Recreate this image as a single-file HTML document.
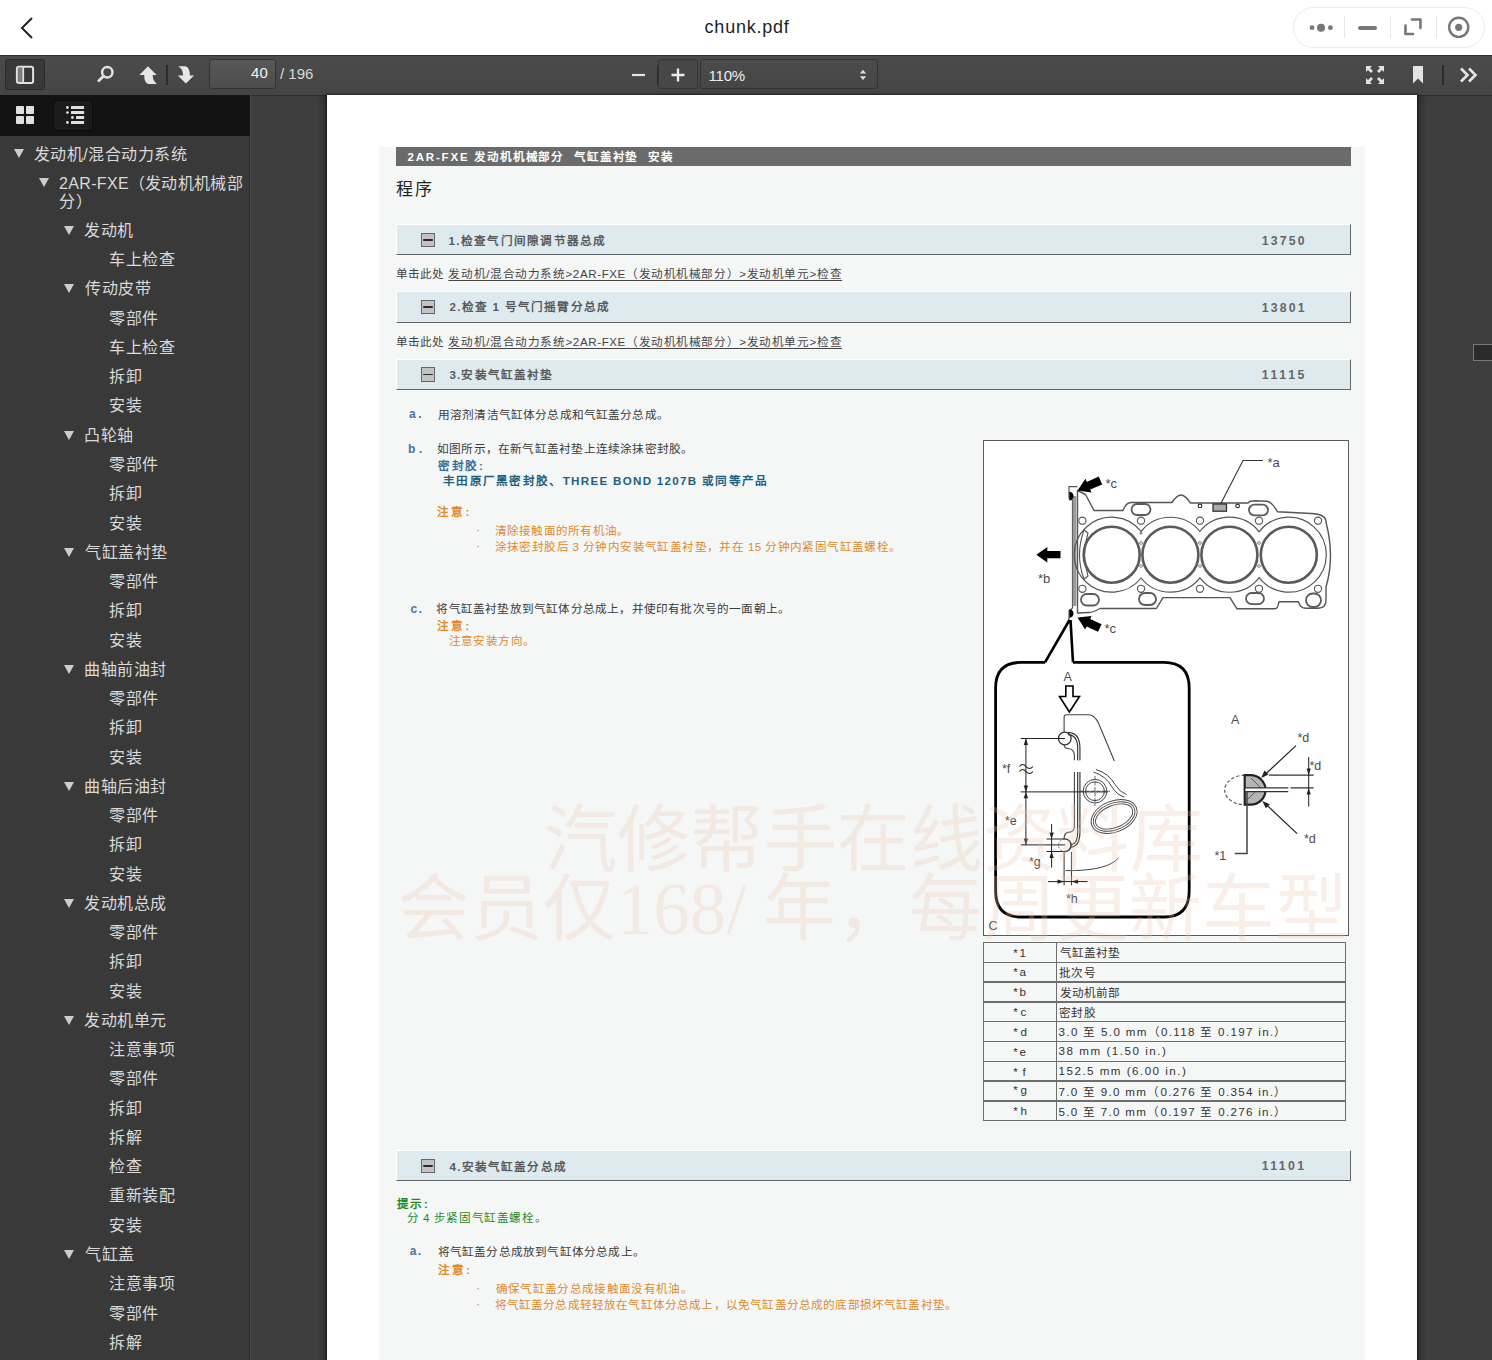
<!DOCTYPE html><html lang="zh-CN"><head><meta charset="utf-8"><title>chunk.pdf</title><style>
*{box-sizing:border-box;margin:0;padding:0}
html,body{width:1492px;height:1360px;overflow:hidden;background:#3e3e3e;font-family:"Liberation Sans",sans-serif}
.t{position:absolute;white-space:nowrap}
</style></head><body><div class="t" style="left:0;top:0;width:1492px;height:55px;background:#fff"></div><div class="t" style="left:704.60px;top:12.50px;font-family:'Liberation Sans',sans-serif;font-size:18px;line-height:29px;color:#1e1e1e;font-weight:normal;letter-spacing:0.763px;">chunk.pdf</div><svg class="t" style="left:18px;top:15px" width="18" height="26" viewBox="0 0 18 26"><path d="M14 3 L4 13 L14 23" fill="none" stroke="#222" stroke-width="2"/></svg><div class="t" style="left:1293px;top:7px;width:192px;height:41px;border:1px solid #ececec;border-radius:21px;background:#fff"></div><div class="t" style="left:1344px;top:16px;width:1px;height:22px;background:#e6e6e6"></div><div class="t" style="left:1390px;top:16px;width:1px;height:22px;background:#e6e6e6"></div><div class="t" style="left:1436px;top:16px;width:1px;height:22px;background:#e6e6e6"></div><svg class="t" style="left:1300px;top:10px" width="180" height="36" viewBox="1300 10 180 36"><circle cx="1312" cy="27.7" r="2.4" fill="#777"/><circle cx="1321" cy="27.7" r="4" fill="#777"/><circle cx="1330.4" cy="27.7" r="2.4" fill="#777"/><line x1="1360" y1="28" x2="1375" y2="28" stroke="#777" stroke-width="4" stroke-linecap="round"/><path d="M1405.5 25.5 V34 H1413 M1412 19.5 H1420.5 V28" fill="none" stroke="#777" stroke-width="2.6" stroke-linecap="round" stroke-linejoin="round"/><circle cx="1458.7" cy="27.3" r="9.6" fill="none" stroke="#777" stroke-width="2.4"/><circle cx="1458.7" cy="27.3" r="3.6" fill="#777"/></svg><div class="t" style="left:0;top:55px;width:1492px;height:40px;background:linear-gradient(#4b4b4b,#484848 50%,#444);border-top:1px solid #2e2e2e;box-shadow:0 1px 1px rgba(0,0,0,.25)"></div><div class="t" style="left:5px;top:59px;width:40px;height:31px;border-radius:3px;background:#393939;border:1px solid #2a2a2a"></div><svg class="t" style="left:14px;top:64px" width="22" height="22" viewBox="0 0 22 22"><rect x="2.9" y="2.8" width="16.2" height="16.2" rx="2" fill="none" stroke="#e2e2e2" stroke-width="2"/><rect x="3.9" y="3.8" width="4.6" height="14.2" fill="#7d7d7d"/><rect x="8.3" y="3.2" width="1.8" height="15.4" fill="#e2e2e2"/></svg><svg class="t" style="left:95px;top:64px" width="22" height="22" viewBox="0 0 22 22"><circle cx="12.3" cy="8.2" r="5.2" fill="none" stroke="#e2e2e2" stroke-width="2.5"/><line x1="8.6" y1="12" x2="3.8" y2="16.8" stroke="#e2e2e2" stroke-width="2.8" stroke-linecap="round"/></svg><svg class="t" style="left:137px;top:64px" width="22" height="22" viewBox="0 0 22 22"><path d="M10.9 2.3 L19.7 11.1 H15.7 Q15.7 17 19.9 19.9 L11.3 19.9 Q7.2 19 7.2 11.1 H2.4 Z" fill="#e6e6e6"/></svg><div class="t" style="left:166px;top:65px;width:2px;height:20px;background:#2a2a2a"></div><svg class="t" style="left:175px;top:64px" width="22" height="22" viewBox="0 0 22 22"><path d="M3.1 2.3 L10.5 2.3 Q14.9 3.5 14.9 11.5 H19 L10.9 19.6 L2.8 11.5 H8.1 Q8.1 5 3.1 2.3 Z" fill="#e6e6e6"/></svg><div class="t" style="left:209px;top:59px;width:67px;height:30px;border-radius:3px;background:linear-gradient(#585858,#4d4d4d);border:1px solid #333"></div><div class="t" style="left:250.90px;top:61.40px;font-family:'Liberation Sans',sans-serif;font-size:15px;line-height:24px;color:#f2f2f2;font-weight:normal;letter-spacing:0.200px;">40</div><div class="t" style="left:279.90px;top:61.90px;font-family:'Liberation Sans',sans-serif;font-size:15px;line-height:24px;color:#d8d8d8;font-weight:normal;letter-spacing:0.025px;">/ 196</div><svg class="t" style="left:628px;top:66px" width="20" height="18"><line x1="4" y1="9" x2="17" y2="9" stroke="#e6e6e6" stroke-width="2.2"/></svg><div class="t" style="left:657px;top:65px;width:1px;height:20px;background:#2a2a2a"></div><div class="t" style="left:658px;top:59px;width:40px;height:30px;border-radius:3px;background:#474747;border:1px solid #353535"></div><svg class="t" style="left:668px;top:65px" width="20" height="20"><path d="M3.5 10 H16.5 M10 3.5 V16.5" stroke="#ececec" stroke-width="2.4"/></svg><div class="t" style="left:700px;top:59px;width:178px;height:30px;border-radius:3px;background:linear-gradient(#4b4b4b,#464646);border:1px solid #333"></div><div class="t" style="left:708.60px;top:63.50px;font-family:'Liberation Sans',sans-serif;font-size:15px;line-height:24px;color:#eeeeee;font-weight:normal;letter-spacing:-0.233px;">110%</div><svg class="t" style="left:856px;top:66px" width="14" height="18"><path d="M3.8 7.6 L7 3.8 L10.2 7.6 Z M3.8 10.2 L7 14 L10.2 10.2 Z" fill="#ddd"/></svg><svg class="t" style="left:1364px;top:64px" width="22" height="22" viewBox="0 0 22 22" fill="#e2e2e2"><path d="M2 2 H8 L6 4 L9 7 L7 9 L4 6 L2 8 Z"/><path d="M20 2 V8 L18 6 L15 9 L13 7 L16 4 L14 2 Z"/><path d="M2 20 V14 L4 16 L7 13 L9 15 L6 18 L8 20 Z"/><path d="M20 20 H14 L16 18 L13 15 L15 13 L18 16 L20 14 Z"/></svg><svg class="t" style="left:1412px;top:65px" width="12" height="20"><path d="M1 1 H11 V18.5 L6 13.5 L1 18.5 Z" fill="#e4e4e4"/></svg><div class="t" style="left:1442px;top:65px;width:2px;height:20px;background:#2a2a2a"></div><svg class="t" style="left:1458px;top:66px" width="22" height="18" viewBox="0 0 22 18"><path d="M3 2.5 L9.5 9 L3 15.5 M11 2.5 L17.5 9 L11 15.5" fill="none" stroke="#e6e6e6" stroke-width="2.6"/></svg><div class="t" style="left:0;top:95px;width:250px;height:1265px;background:#393939"></div><div class="t" style="left:0;top:95px;width:250px;height:41px;background:#131313"></div><div class="t" style="left:249px;top:136px;width:1px;height:1224px;background:#2b2b2b"></div><div class="t" style="left:250px;top:95px;width:1px;height:1265px;background:#484848"></div><svg class="t" style="left:15px;top:105px" width="20" height="20" viewBox="0 0 20 20" fill="#e0e0e0"><rect x="1" y="1" width="8" height="8" rx="1"/><rect x="11" y="1" width="8" height="8" rx="1"/><rect x="1" y="11" width="8" height="8" rx="1"/><rect x="11" y="11" width="8" height="8" rx="1"/></svg><div class="t" style="left:53px;top:100px;width:40px;height:31px;border-radius:3px;background:#1b1b1b;border:1px solid #0b0b0b"></div><svg class="t" style="left:64px;top:104px" width="22" height="22" viewBox="0 0 22 22" fill="#e0e0e0"><rect x="7" y="2" width="13.1" height="3" rx=".5"/><rect x="7" y="7.1" width="13.1" height="3" rx=".5"/><rect x="12" y="12" width="8.1" height="3" rx=".5"/><rect x="7" y="17" width="13.1" height="3" rx=".5"/><circle cx="3.4" cy="3.5" r="1.4"/><circle cx="3.4" cy="8.6" r="1.4"/><circle cx="8.4" cy="13.5" r="1.4"/><circle cx="3.4" cy="18.5" r="1.4"/></svg><div class="t" style="left:33.80px;top:141.50px;font-family:'Liberation Sans',sans-serif;font-size:16px;line-height:26px;color:#d9d9d9;font-weight:normal;letter-spacing:0.522px;">发动机/混合动力系统</div><div class="t" style="left:14px;top:148.90px;width:0;height:0;border-left:5.7px solid transparent;border-right:5.7px solid transparent;border-top:9px solid #cdcdcd"></div><div class="t" style="left:59.10px;top:171.00px;font-family:'Liberation Sans',sans-serif;font-size:16px;line-height:26px;color:#d9d9d9;font-weight:normal;letter-spacing:0.315px;">2AR-FXE（发动机机械部</div><div class="t" style="left:39px;top:178.40px;width:0;height:0;border-left:5.7px solid transparent;border-right:5.7px solid transparent;border-top:9px solid #cdcdcd"></div><div class="t" style="left:59.10px;top:189.10px;font-family:'Liberation Sans',sans-serif;font-size:16px;line-height:26px;color:#d9d9d9;font-weight:normal;letter-spacing:0.600px;">分）</div><div class="t" style="left:84.00px;top:217.90px;font-family:'Liberation Sans',sans-serif;font-size:16px;line-height:26px;color:#d9d9d9;font-weight:normal;letter-spacing:0.600px;">发动机</div><div class="t" style="left:64px;top:225.80px;width:0;height:0;border-left:5.7px solid transparent;border-right:5.7px solid transparent;border-top:9px solid #cdcdcd"></div><div class="t" style="left:109.00px;top:247.16px;font-family:'Liberation Sans',sans-serif;font-size:16px;line-height:26px;color:#d9d9d9;font-weight:normal;letter-spacing:0.600px;">车上检查</div><div class="t" style="left:85.00px;top:276.42px;font-family:'Liberation Sans',sans-serif;font-size:16px;line-height:26px;color:#d9d9d9;font-weight:normal;letter-spacing:0.600px;">传动皮带</div><div class="t" style="left:64px;top:284.32px;width:0;height:0;border-left:5.7px solid transparent;border-right:5.7px solid transparent;border-top:9px solid #cdcdcd"></div><div class="t" style="left:109.00px;top:305.68px;font-family:'Liberation Sans',sans-serif;font-size:16px;line-height:26px;color:#d9d9d9;font-weight:normal;letter-spacing:0.600px;">零部件</div><div class="t" style="left:109.00px;top:334.94px;font-family:'Liberation Sans',sans-serif;font-size:16px;line-height:26px;color:#d9d9d9;font-weight:normal;letter-spacing:0.600px;">车上检查</div><div class="t" style="left:109.00px;top:364.20px;font-family:'Liberation Sans',sans-serif;font-size:16px;line-height:26px;color:#d9d9d9;font-weight:normal;letter-spacing:0.600px;">拆卸</div><div class="t" style="left:109.00px;top:393.46px;font-family:'Liberation Sans',sans-serif;font-size:16px;line-height:26px;color:#d9d9d9;font-weight:normal;letter-spacing:0.600px;">安装</div><div class="t" style="left:84.00px;top:422.72px;font-family:'Liberation Sans',sans-serif;font-size:16px;line-height:26px;color:#d9d9d9;font-weight:normal;letter-spacing:0.600px;">凸轮轴</div><div class="t" style="left:64px;top:430.62px;width:0;height:0;border-left:5.7px solid transparent;border-right:5.7px solid transparent;border-top:9px solid #cdcdcd"></div><div class="t" style="left:109.00px;top:451.98px;font-family:'Liberation Sans',sans-serif;font-size:16px;line-height:26px;color:#d9d9d9;font-weight:normal;letter-spacing:0.600px;">零部件</div><div class="t" style="left:109.00px;top:481.24px;font-family:'Liberation Sans',sans-serif;font-size:16px;line-height:26px;color:#d9d9d9;font-weight:normal;letter-spacing:0.600px;">拆卸</div><div class="t" style="left:109.00px;top:510.50px;font-family:'Liberation Sans',sans-serif;font-size:16px;line-height:26px;color:#d9d9d9;font-weight:normal;letter-spacing:0.600px;">安装</div><div class="t" style="left:85.00px;top:539.76px;font-family:'Liberation Sans',sans-serif;font-size:16px;line-height:26px;color:#d9d9d9;font-weight:normal;letter-spacing:0.600px;">气缸盖衬垫</div><div class="t" style="left:64px;top:547.66px;width:0;height:0;border-left:5.7px solid transparent;border-right:5.7px solid transparent;border-top:9px solid #cdcdcd"></div><div class="t" style="left:109.00px;top:569.02px;font-family:'Liberation Sans',sans-serif;font-size:16px;line-height:26px;color:#d9d9d9;font-weight:normal;letter-spacing:0.600px;">零部件</div><div class="t" style="left:109.00px;top:598.28px;font-family:'Liberation Sans',sans-serif;font-size:16px;line-height:26px;color:#d9d9d9;font-weight:normal;letter-spacing:0.600px;">拆卸</div><div class="t" style="left:109.00px;top:627.54px;font-family:'Liberation Sans',sans-serif;font-size:16px;line-height:26px;color:#d9d9d9;font-weight:normal;letter-spacing:0.600px;">安装</div><div class="t" style="left:84.00px;top:656.80px;font-family:'Liberation Sans',sans-serif;font-size:16px;line-height:26px;color:#d9d9d9;font-weight:normal;letter-spacing:0.600px;">曲轴前油封</div><div class="t" style="left:64px;top:664.70px;width:0;height:0;border-left:5.7px solid transparent;border-right:5.7px solid transparent;border-top:9px solid #cdcdcd"></div><div class="t" style="left:109.00px;top:686.06px;font-family:'Liberation Sans',sans-serif;font-size:16px;line-height:26px;color:#d9d9d9;font-weight:normal;letter-spacing:0.600px;">零部件</div><div class="t" style="left:109.00px;top:715.32px;font-family:'Liberation Sans',sans-serif;font-size:16px;line-height:26px;color:#d9d9d9;font-weight:normal;letter-spacing:0.600px;">拆卸</div><div class="t" style="left:109.00px;top:744.58px;font-family:'Liberation Sans',sans-serif;font-size:16px;line-height:26px;color:#d9d9d9;font-weight:normal;letter-spacing:0.600px;">安装</div><div class="t" style="left:84.00px;top:773.84px;font-family:'Liberation Sans',sans-serif;font-size:16px;line-height:26px;color:#d9d9d9;font-weight:normal;letter-spacing:0.600px;">曲轴后油封</div><div class="t" style="left:64px;top:781.74px;width:0;height:0;border-left:5.7px solid transparent;border-right:5.7px solid transparent;border-top:9px solid #cdcdcd"></div><div class="t" style="left:109.00px;top:803.10px;font-family:'Liberation Sans',sans-serif;font-size:16px;line-height:26px;color:#d9d9d9;font-weight:normal;letter-spacing:0.600px;">零部件</div><div class="t" style="left:109.00px;top:832.36px;font-family:'Liberation Sans',sans-serif;font-size:16px;line-height:26px;color:#d9d9d9;font-weight:normal;letter-spacing:0.600px;">拆卸</div><div class="t" style="left:109.00px;top:861.62px;font-family:'Liberation Sans',sans-serif;font-size:16px;line-height:26px;color:#d9d9d9;font-weight:normal;letter-spacing:0.600px;">安装</div><div class="t" style="left:84.00px;top:890.88px;font-family:'Liberation Sans',sans-serif;font-size:16px;line-height:26px;color:#d9d9d9;font-weight:normal;letter-spacing:0.600px;">发动机总成</div><div class="t" style="left:64px;top:898.78px;width:0;height:0;border-left:5.7px solid transparent;border-right:5.7px solid transparent;border-top:9px solid #cdcdcd"></div><div class="t" style="left:109.00px;top:920.14px;font-family:'Liberation Sans',sans-serif;font-size:16px;line-height:26px;color:#d9d9d9;font-weight:normal;letter-spacing:0.600px;">零部件</div><div class="t" style="left:109.00px;top:949.40px;font-family:'Liberation Sans',sans-serif;font-size:16px;line-height:26px;color:#d9d9d9;font-weight:normal;letter-spacing:0.600px;">拆卸</div><div class="t" style="left:109.00px;top:978.66px;font-family:'Liberation Sans',sans-serif;font-size:16px;line-height:26px;color:#d9d9d9;font-weight:normal;letter-spacing:0.600px;">安装</div><div class="t" style="left:84.00px;top:1007.92px;font-family:'Liberation Sans',sans-serif;font-size:16px;line-height:26px;color:#d9d9d9;font-weight:normal;letter-spacing:0.600px;">发动机单元</div><div class="t" style="left:64px;top:1015.82px;width:0;height:0;border-left:5.7px solid transparent;border-right:5.7px solid transparent;border-top:9px solid #cdcdcd"></div><div class="t" style="left:109.00px;top:1037.18px;font-family:'Liberation Sans',sans-serif;font-size:16px;line-height:26px;color:#d9d9d9;font-weight:normal;letter-spacing:0.600px;">注意事项</div><div class="t" style="left:109.00px;top:1066.44px;font-family:'Liberation Sans',sans-serif;font-size:16px;line-height:26px;color:#d9d9d9;font-weight:normal;letter-spacing:0.600px;">零部件</div><div class="t" style="left:109.00px;top:1095.70px;font-family:'Liberation Sans',sans-serif;font-size:16px;line-height:26px;color:#d9d9d9;font-weight:normal;letter-spacing:0.600px;">拆卸</div><div class="t" style="left:109.00px;top:1124.96px;font-family:'Liberation Sans',sans-serif;font-size:16px;line-height:26px;color:#d9d9d9;font-weight:normal;letter-spacing:0.600px;">拆解</div><div class="t" style="left:109.00px;top:1154.22px;font-family:'Liberation Sans',sans-serif;font-size:16px;line-height:26px;color:#d9d9d9;font-weight:normal;letter-spacing:0.600px;">检查</div><div class="t" style="left:109.00px;top:1183.48px;font-family:'Liberation Sans',sans-serif;font-size:16px;line-height:26px;color:#d9d9d9;font-weight:normal;letter-spacing:0.600px;">重新装配</div><div class="t" style="left:109.00px;top:1212.74px;font-family:'Liberation Sans',sans-serif;font-size:16px;line-height:26px;color:#d9d9d9;font-weight:normal;letter-spacing:0.600px;">安装</div><div class="t" style="left:85.00px;top:1242.00px;font-family:'Liberation Sans',sans-serif;font-size:16px;line-height:26px;color:#d9d9d9;font-weight:normal;letter-spacing:0.600px;">气缸盖</div><div class="t" style="left:64px;top:1249.90px;width:0;height:0;border-left:5.7px solid transparent;border-right:5.7px solid transparent;border-top:9px solid #cdcdcd"></div><div class="t" style="left:109.00px;top:1271.26px;font-family:'Liberation Sans',sans-serif;font-size:16px;line-height:26px;color:#d9d9d9;font-weight:normal;letter-spacing:0.600px;">注意事项</div><div class="t" style="left:109.00px;top:1300.52px;font-family:'Liberation Sans',sans-serif;font-size:16px;line-height:26px;color:#d9d9d9;font-weight:normal;letter-spacing:0.600px;">零部件</div><div class="t" style="left:109.00px;top:1329.78px;font-family:'Liberation Sans',sans-serif;font-size:16px;line-height:26px;color:#d9d9d9;font-weight:normal;letter-spacing:0.600px;">拆解</div><div class="t" style="left:318px;top:95px;width:9px;height:1265px;background:linear-gradient(to right,rgba(0,0,0,0),rgba(0,0,0,.28))"></div><div class="t" style="left:1417px;top:95px;width:9px;height:1265px;background:linear-gradient(to left,rgba(0,0,0,0),rgba(0,0,0,.28))"></div><div class="t" style="left:327px;top:95px;width:1090px;height:1265px;background:#fff;box-shadow:0 0 2px 1px rgba(0,0,0,.55)"></div><div class="t" style="left:379px;top:146.5px;width:986px;height:1214px;background:#f5f7f7"></div><div class="t" style="left:396px;top:147.4px;width:955px;height:18.3px;background:#6b6b6b"></div><div class="t" style="left:407.50px;top:147.90px;font-family:'Liberation Sans',sans-serif;font-size:11.5px;line-height:18px;color:#fff;font-weight:bold;letter-spacing:1.812px;">2AR-FXE 发动机机械部分&nbsp;&nbsp;气缸盖衬垫&nbsp;&nbsp;安装</div><div class="t" style="left:396.00px;top:175.90px;font-family:'Liberation Sans',sans-serif;font-size:17px;line-height:27px;color:#222;font-weight:normal;letter-spacing:1.900px;">程序</div><div class="t" style="left:395.8px;top:224.40px;width:955.5px;height:30.70px;background:#dfeaee;border-top:1px solid #fff;border-left:1px solid #fff;border-right:1.6px solid #666;border-bottom:1.6px solid #5f6467"></div><div class="t" style="left:421px;top:233px;width:14.3px;height:14.3px;background:#c3c3c3;border:1.3px solid #666"></div><div class="t" style="left:423px;top:239.4px;width:10px;height:1.7px;background:#2a2a2a;border-radius:1px"></div><div class="t" style="left:448.50px;top:230.85px;font-family:'Liberation Sans',sans-serif;font-size:11.6px;line-height:19px;color:#5a5a5a;font-weight:bold;letter-spacing:1.275px;">1.检查气门间隙调节器总成</div><div class="t" style="left:1261.80px;top:230.65px;font-family:'Liberation Sans',sans-serif;font-size:12.3px;line-height:20px;color:#666;font-weight:bold;letter-spacing:2.125px;">13750</div><div class="t" style="left:395.8px;top:290.90px;width:955.5px;height:31.70px;background:#dfeaee;border-top:1px solid #fff;border-left:1px solid #fff;border-right:1.6px solid #666;border-bottom:1.6px solid #5f6467"></div><div class="t" style="left:421px;top:299.5px;width:14.3px;height:14.3px;background:#c3c3c3;border:1.3px solid #666"></div><div class="t" style="left:423px;top:305.9px;width:10px;height:1.7px;background:#2a2a2a;border-radius:1px"></div><div class="t" style="left:449.50px;top:297.35px;font-family:'Liberation Sans',sans-serif;font-size:11.6px;line-height:19px;color:#5a5a5a;font-weight:bold;letter-spacing:1.214px;">2.检查 1 号气门摇臂分总成</div><div class="t" style="left:1261.80px;top:297.65px;font-family:'Liberation Sans',sans-serif;font-size:12.3px;line-height:20px;color:#666;font-weight:bold;letter-spacing:2.125px;">13801</div><div class="t" style="left:395.8px;top:358.70px;width:955.5px;height:31.10px;background:#dfeaee;border-top:1px solid #fff;border-left:1px solid #fff;border-right:1.6px solid #666;border-bottom:1.6px solid #5f6467"></div><div class="t" style="left:421px;top:367.3px;width:14.3px;height:14.3px;background:#c3c3c3;border:1.3px solid #666"></div><div class="t" style="left:423px;top:373.7px;width:10px;height:1.7px;background:#2a2a2a;border-radius:1px"></div><div class="t" style="left:449.50px;top:365.35px;font-family:'Liberation Sans',sans-serif;font-size:11.6px;line-height:19px;color:#5a5a5a;font-weight:bold;letter-spacing:1.112px;">3.安装气缸盖衬垫</div><div class="t" style="left:1261.80px;top:365.15px;font-family:'Liberation Sans',sans-serif;font-size:12.3px;line-height:20px;color:#666;font-weight:bold;letter-spacing:2.625px;">11115</div><div class="t" style="left:395.8px;top:1150.10px;width:955.5px;height:30.80px;background:#dfeaee;border-top:1px solid #fff;border-left:1px solid #fff;border-right:1.6px solid #666;border-bottom:1.6px solid #5f6467"></div><div class="t" style="left:421px;top:1158.7px;width:14.3px;height:14.3px;background:#c3c3c3;border:1.3px solid #666"></div><div class="t" style="left:423px;top:1165.1000000000001px;width:10px;height:1.7px;background:#2a2a2a;border-radius:1px"></div><div class="t" style="left:449.50px;top:1156.60px;font-family:'Liberation Sans',sans-serif;font-size:11.6px;line-height:19px;color:#5a5a5a;font-weight:bold;letter-spacing:1.178px;">4.安装气缸盖分总成</div><div class="t" style="left:1261.80px;top:1156.40px;font-family:'Liberation Sans',sans-serif;font-size:12.3px;line-height:20px;color:#666;font-weight:bold;letter-spacing:2.375px;">11101</div><div class="t" style="left:395.60px;top:264.20px;font-family:'Liberation Sans',sans-serif;font-size:11.6px;line-height:19px;color:#444;font-weight:normal;letter-spacing:0.167px;">单击此处</div><div class="t" style="left:448.40px;top:264.20px;font-family:'Liberation Sans',sans-serif;font-size:11.6px;line-height:19px;color:#444;font-weight:normal;letter-spacing:0.589px;text-decoration:underline;text-underline-offset:2px">发动机/混合动力系统&gt;2AR-FXE（发动机机械部分）&gt;发动机单元&gt;检查</div><div class="t" style="left:395.60px;top:331.50px;font-family:'Liberation Sans',sans-serif;font-size:11.6px;line-height:19px;color:#444;font-weight:normal;letter-spacing:0.167px;">单击此处</div><div class="t" style="left:448.40px;top:331.50px;font-family:'Liberation Sans',sans-serif;font-size:11.6px;line-height:19px;color:#444;font-weight:normal;letter-spacing:0.589px;text-decoration:underline;text-underline-offset:2px">发动机/混合动力系统&gt;2AR-FXE（发动机机械部分）&gt;发动机单元&gt;检查</div><div class="t" style="left:408.90px;top:404.60px;font-family:'Liberation Sans',sans-serif;font-size:12px;line-height:19px;color:#4a74a0;font-weight:bold;letter-spacing:2.700px;">a.</div><div class="t" style="left:437.90px;top:404.50px;font-family:'Liberation Sans',sans-serif;font-size:11.7px;line-height:19px;color:#3a3a3a;font-weight:normal;letter-spacing:0.161px;">用溶剂清洁气缸体分总成和气缸盖分总成。</div><div class="t" style="left:407.90px;top:439.70px;font-family:'Liberation Sans',sans-serif;font-size:12px;line-height:19px;color:#4a74a0;font-weight:bold;letter-spacing:3.700px;">b.</div><div class="t" style="left:436.90px;top:438.50px;font-family:'Liberation Sans',sans-serif;font-size:11.7px;line-height:19px;color:#3a3a3a;font-weight:normal;letter-spacing:0.225px;">如图所示，在新气缸盖衬垫上连续涂抹密封胶。</div><div class="t" style="left:437.90px;top:455.70px;font-family:'Liberation Sans',sans-serif;font-size:11.6px;line-height:19px;color:#3a6f9c;font-weight:bold;letter-spacing:1.667px;">密封胶:</div><div class="t" style="left:443.00px;top:470.50px;font-family:'Liberation Sans',sans-serif;font-size:11.6px;line-height:19px;color:#22607f;font-weight:bold;letter-spacing:1.300px;">丰田原厂黑密封胶、THREE BOND 1207B 或同等产品</div><div class="t" style="left:437.40px;top:502.20px;font-family:'Liberation Sans',sans-serif;font-size:11.6px;line-height:19px;color:#e0892a;font-weight:bold;letter-spacing:2.100px;">注意:</div><div class="t" style="left:476.00px;top:521.00px;font-family:'Liberation Sans',sans-serif;font-size:12px;line-height:19px;color:#e0892a;font-weight:normal;letter-spacing:0.000px;">·</div><div class="t" style="left:494.50px;top:521.00px;font-family:'Liberation Sans',sans-serif;font-size:11.6px;line-height:19px;color:#e0892a;font-weight:normal;letter-spacing:0.260px;">清除接触面的所有机油。</div><div class="t" style="left:476.00px;top:536.50px;font-family:'Liberation Sans',sans-serif;font-size:12px;line-height:19px;color:#e0892a;font-weight:normal;letter-spacing:0.000px;">·</div><div class="t" style="left:494.50px;top:536.50px;font-family:'Liberation Sans',sans-serif;font-size:11.6px;line-height:19px;color:#e0892a;font-weight:normal;letter-spacing:0.403px;">涂抹密封胶后 3 分钟内安装气缸盖衬垫，并在 15 分钟内紧固气缸盖螺栓。</div><div class="t" style="left:410.50px;top:599.60px;font-family:'Liberation Sans',sans-serif;font-size:12px;line-height:19px;color:#4a74a0;font-weight:bold;letter-spacing:1.500px;">c.</div><div class="t" style="left:436.40px;top:598.90px;font-family:'Liberation Sans',sans-serif;font-size:11.6px;line-height:19px;color:#3a3a3a;font-weight:normal;letter-spacing:0.200px;">将气缸盖衬垫放到气缸体分总成上，并使印有批次号的一面朝上。</div><div class="t" style="left:437.40px;top:615.90px;font-family:'Liberation Sans',sans-serif;font-size:11.6px;line-height:19px;color:#e0892a;font-weight:bold;letter-spacing:2.100px;">注意:</div><div class="t" style="left:448.50px;top:630.70px;font-family:'Liberation Sans',sans-serif;font-size:11.6px;line-height:19px;color:#e0892a;font-weight:normal;letter-spacing:0.450px;">注意安装方向。</div><div class="t" style="left:396.60px;top:1193.50px;font-family:'Liberation Sans',sans-serif;font-size:11.6px;line-height:19px;color:#1f8a1f;font-weight:bold;letter-spacing:1.750px;">提示:</div><div class="t" style="left:406.50px;top:1208.00px;font-family:'Liberation Sans',sans-serif;font-size:11.6px;line-height:19px;color:#1f8a1f;font-weight:normal;letter-spacing:0.608px;">分 4 步紧固气缸盖螺栓。</div><div class="t" style="left:409.80px;top:1242.20px;font-family:'Liberation Sans',sans-serif;font-size:12px;line-height:19px;color:#4a74a0;font-weight:bold;letter-spacing:1.400px;">a.</div><div class="t" style="left:437.50px;top:1242.20px;font-family:'Liberation Sans',sans-serif;font-size:11.6px;line-height:19px;color:#3a3a3a;font-weight:normal;letter-spacing:0.206px;">将气缸盖分总成放到气缸体分总成上。</div><div class="t" style="left:438.00px;top:1259.50px;font-family:'Liberation Sans',sans-serif;font-size:11.6px;line-height:19px;color:#e0892a;font-weight:bold;letter-spacing:2.000px;">注意:</div><div class="t" style="left:476.00px;top:1279.10px;font-family:'Liberation Sans',sans-serif;font-size:12px;line-height:19px;color:#e0892a;font-weight:normal;letter-spacing:0.000px;">·</div><div class="t" style="left:495.50px;top:1279.10px;font-family:'Liberation Sans',sans-serif;font-size:11.6px;line-height:19px;color:#e0892a;font-weight:normal;letter-spacing:0.340px;">确保气缸盖分总成接触面没有机油。</div><div class="t" style="left:476.00px;top:1294.60px;font-family:'Liberation Sans',sans-serif;font-size:12px;line-height:19px;color:#e0892a;font-weight:normal;letter-spacing:0.000px;">·</div><div class="t" style="left:494.50px;top:1294.60px;font-family:'Liberation Sans',sans-serif;font-size:11.6px;line-height:19px;color:#e0892a;font-weight:normal;letter-spacing:0.176px;">将气缸盖分总成轻轻放在气缸体分总成上，以免气缸盖分总成的底部损坏气缸盖衬垫。</div><div class="t" style="left:983px;top:440px;width:366px;height:496px;background:#fff;border:1px solid #5a5a5a"></div><svg class="t" style="left:983px;top:440px" width="366" height="496" viewBox="983 440 366 496">
<path d="M1077.5 490.5 L1085.5 494.5 L1094 510.5 L1123 510.5 Q1126 502.5 1131 502.5 L1172 502.5 Q1177 495 1181 495 Q1185 495 1190.5 503 L1248 503 Q1250 500.8 1255 500.8 L1267 501.2 Q1272 502 1277.6 511.8 L1311 513.5 Q1326 514 1326 522 Q1330.5 540 1330.5 555 Q1330.5 572 1326 587 L1326 600 Q1326 608.2 1318 608.2 L1306 608.2 Q1300 608 1298.5 601.8 L1279 601.8 Q1277.6 608.8 1275 608.8 L1237 608.8 L1230 597.6 L1163 597.6 L1156.4 608.5 L1100 608.5 Q1093 612.5 1089 612.5 L1077.5 613 Z" fill="none" stroke="#555" stroke-width="1.4" stroke-linejoin="round"/>
<path d="M1077.5 486.6 L1069 486.6 L1069 498 L1072.5 500 L1072.5 608 L1069 611 L1069 620.4" fill="none" stroke="#555" stroke-width="1.2"/>
<rect x="1072.8" y="496" width="3.6" height="110" fill="#9a9a9a"/>
<path d="M1069.3 491.8 A4.3 4.3 0 0 1 1069.3 500.4 Z M1069.3 609.2 A4.3 4.3 0 0 1 1069.3 617.8 Z" fill="#000"/>
<path d="M1084 530 Q1075 555 1084 579 L1088 576 Q1081 555 1088 533 Z" fill="none" stroke="#555" stroke-width="1.1"/>
<circle cx="1111.7" cy="554.7" r="28" fill="none" stroke="#5a5a5a" stroke-width="2.6"/>
<circle cx="1170.4" cy="554.7" r="28" fill="none" stroke="#5a5a5a" stroke-width="2.6"/>
<circle cx="1229.4" cy="554.7" r="28" fill="none" stroke="#5a5a5a" stroke-width="2.6"/>
<circle cx="1288.8" cy="554.7" r="28" fill="none" stroke="#5a5a5a" stroke-width="2.6"/>
<path d="M1141.1 531.4 A37.5 37.5 0 0 1 1199.9 531.5 A37.5 37.5 0 0 1 1259.1 531.8 A37.5 37.5 0 1 1 1259.1 577.6 A37.5 37.5 0 0 1 1199.9 577.9 A37.5 37.5 0 0 1 1141.1 578.0 A37.5 37.5 0 1 1 1141.1 531.4 Z" fill="none" stroke="#555" stroke-width="1.2"/>
<circle cx="1082.4" cy="520.7" r="3.6" fill="#fff" stroke="#555" stroke-width="1.1"/>
<circle cx="1082.4" cy="588.8" r="3.6" fill="#fff" stroke="#555" stroke-width="1.1"/>
<circle cx="1141" cy="520.7" r="3.6" fill="#fff" stroke="#555" stroke-width="1.1"/>
<circle cx="1141" cy="588.8" r="3.6" fill="#fff" stroke="#555" stroke-width="1.1"/>
<circle cx="1200" cy="520.7" r="3.6" fill="#fff" stroke="#555" stroke-width="1.1"/>
<circle cx="1200" cy="588.8" r="3.6" fill="#fff" stroke="#555" stroke-width="1.1"/>
<circle cx="1259" cy="520.7" r="3.6" fill="#fff" stroke="#555" stroke-width="1.1"/>
<circle cx="1259" cy="588.8" r="3.6" fill="#fff" stroke="#555" stroke-width="1.1"/>
<circle cx="1318" cy="520.7" r="3.6" fill="#fff" stroke="#555" stroke-width="1.1"/>
<circle cx="1318" cy="588.8" r="3.6" fill="#fff" stroke="#555" stroke-width="1.1"/>
<circle cx="1141" cy="543" r="1.4" fill="none" stroke="#777" stroke-width="0.9"/><circle cx="1141" cy="566" r="1.4" fill="none" stroke="#777" stroke-width="0.9"/>
<circle cx="1200" cy="543" r="1.4" fill="none" stroke="#777" stroke-width="0.9"/><circle cx="1200" cy="566" r="1.4" fill="none" stroke="#777" stroke-width="0.9"/>
<circle cx="1259" cy="543" r="1.4" fill="none" stroke="#777" stroke-width="0.9"/><circle cx="1259" cy="566" r="1.4" fill="none" stroke="#777" stroke-width="0.9"/>
<circle cx="1141" cy="533" r="1.5" fill="#888"/>
<circle cx="1200" cy="505.9" r="1.8" fill="none" stroke="#333" stroke-width="1.2"/><circle cx="1237.6" cy="505.9" r="1.8" fill="none" stroke="#333" stroke-width="1.2"/>
<rect x="1131.5" y="504" width="19.0" height="11" rx="5.5" fill="none" stroke="#5a5a5a" stroke-width="1.8"/>
<rect x="1249" y="504.7" width="19" height="10.599999999999966" rx="5.3" fill="none" stroke="#5a5a5a" stroke-width="1.8"/>
<rect x="1081" y="594" width="18" height="11.5" rx="5.8" fill="none" stroke="#5a5a5a" stroke-width="1.8"/>
<rect x="1139" y="593" width="17" height="12" rx="6.0" fill="none" stroke="#5a5a5a" stroke-width="1.8"/>
<rect x="1246" y="593" width="18" height="11.100000000000023" rx="5.6" fill="none" stroke="#5a5a5a" stroke-width="1.8"/>
<rect x="1306" y="593.5" width="15" height="13.5" rx="6.8" fill="none" stroke="#5a5a5a" stroke-width="1.8"/>
<rect x="1213" y="504" width="13.5" height="7.2" fill="#aaa" stroke="#333" stroke-width="1.3"/>
<path d="M1220.6 504 L1243 460.5 L1263 460.5" fill="none" stroke="#333" stroke-width="1.1"/>
<path d="M1077.5 490.5 L1091.5 492.6 L1090.2 489.6 L1102.2 484.4 L1098.8 476.6 L1086.8 481.9 L1085.5 478.8 Z" fill="#000"/>
<path d="M1077.5 617.6 L1085.2 629.5 L1086.6 626.5 L1098.0 631.8 L1101.6 624.2 L1090.2 618.9 L1091.5 615.9 Z" fill="#000"/>
<path d="M1036.3 554.7 L1047.3 562.4 L1047.3 558.3 L1060.5 558.3 L1060.5 551.1 L1047.3 551.1 L1047.3 547.0 Z" fill="#000"/>
<text x="1105.5" y="487.5" style="font-family:Liberation Sans,sans-serif;font-size:13px;fill:#4a4a4a">*c</text>
<text x="1104.5" y="633" style="font-family:Liberation Sans,sans-serif;font-size:13px;fill:#4a4a4a">*c</text>
<text x="1038" y="583" style="font-family:Liberation Sans,sans-serif;font-size:13px;fill:#4a4a4a">*b</text>
<text x="1267.5" y="467" style="font-family:Liberation Sans,sans-serif;font-size:13px;fill:#4a4a4a">*a</text>
<path d="M1045 662.4 L1069.5 620 M1073 662.4 L1070.5 620" stroke="#000" stroke-width="2.6" fill="none"/>
<path d="M1045 662.4 L1021 662.4 Q995.6 662.4 995.6 688 L995.6 891 Q995.6 917 1021 917 L1164 917 Q1189.2 917 1189.2 891 L1189.2 688 Q1189.2 662.4 1164 662.4 L1073 662.4" stroke="#000" stroke-width="2.8" fill="none"/>
<text x="1063.5" y="681" style="font-family:Liberation Sans,sans-serif;font-size:12.5px;fill:#4a4a4a">A</text>
<path d="M1065.8 686 L1073 686 L1073 696.5 L1079.5 696.5 L1069.4 712 L1059.5 696.5 L1065.8 696.5 Z" fill="#fff" stroke="#000" stroke-width="1.6"/>
<path d="M1064.1 732 L1064.1 717 Q1064.1 714.7 1066.5 714.7 L1089 714.7 Q1094 715 1098 722 L1114.4 761" fill="none" stroke="#444" stroke-width="1.1"/>
<path d="M1064.1 745 Q1064.5 748.5 1068 748.5 Q1074.4 749 1074.4 756 L1074.4 760.3 M1074.4 772 L1074.4 826.5 Q1074.4 832.4 1068 832.4 Q1064.1 833 1064.1 838.9 M1064.1 852 L1064.1 885.3" fill="none" stroke="#444" stroke-width="1.1"/>
<path d="M1068 733.5 Q1078.8 734 1078.8 748 L1078.8 760.3 M1078.8 772 L1078.8 832 Q1078.8 846 1070 846" fill="none" stroke="#333" stroke-width="3.4"/>
<path d="M1068 733.5 Q1078.8 734 1078.8 748 L1078.8 760.3 M1078.8 772 L1078.8 832 Q1078.8 846 1070 846" fill="none" stroke="#fff" stroke-width="1.1"/>
<circle cx="1064.8" cy="738.5" r="6.3" fill="none" stroke="#333" stroke-width="1.3"/>
<path d="M1064.8 838.9 A6.3 6.3 0 0 1 1064.8 851.5" fill="none" stroke="#333" stroke-width="1.4"/><path d="M1064.8 838.9 A6.3 6.3 0 0 0 1064.8 851.5" fill="none" stroke="#777" stroke-width="1" stroke-dasharray="2 1.6"/>
<path d="M1071.5 852 L1071.5 885.3" fill="none" stroke="#444" stroke-width="1.1"/>
<circle cx="1095" cy="791.2" r="11.8" fill="none" stroke="#444" stroke-width="1"/><circle cx="1095" cy="791.2" r="9.4" fill="none" stroke="#444" stroke-width="1"/>
<path d="M1095 776 L1095 806 M1080 791.2 L1110 791.2" fill="none" stroke="#444" stroke-width="0.8" stroke-dasharray="4 1.5"/>
<ellipse cx="1114.1" cy="816.5" rx="24" ry="15.5" transform="rotate(-22 1114.1 816.5)" fill="none" stroke="#444" stroke-width="0.9"/>
<ellipse cx="1114.1" cy="816.5" rx="21.8" ry="13.3" transform="rotate(-22 1114.1 816.5)" fill="none" stroke="#444" stroke-width="0.9"/>
<ellipse cx="1114.1" cy="816.5" rx="19.6" ry="11.1" transform="rotate(-22 1114.1 816.5)" fill="none" stroke="#444" stroke-width="0.9"/>
<path d="M1093.5 772 Q1106 776 1112 787 Q1117 795 1124.4 797 M1096 769.5 Q1109 773.5 1115 784.5 Q1120 792.5 1126.5 794.5" fill="none" stroke="#444" stroke-width="1"/>
<path d="M1065.6 870.6 L1073 870.6 Q1108 870 1118.5 858" fill="none" stroke="#444" stroke-width="1"/>
<path d="M1020.7 738.5 L1065 738.5 M1020.7 791.9 L1108 791.9 M1020.7 844.9 L1065 844.9 M1025.9 738.5 L1025.9 844.9" fill="none" stroke="#222" stroke-width="1"/>
<path d="M1023.7 745 L1025.9 738.5 L1028.1 745 Z M1023.7 785.5 L1025.9 791.9 L1028.1 785.5 Z M1023.7 798.3 L1025.9 791.9 L1028.1 798.3 Z M1023.7 838.5 L1025.9 844.9 L1028.1 838.5 Z" fill="#222"/>
<path d="M1019.5 766.5 Q1022.5 762.5 1026 766.5 Q1029.5 770.5 1033 766.5 M1019.5 771.5 Q1022.5 767.5 1026 771.5 Q1029.5 775.5 1033 771.5" fill="none" stroke="#222" stroke-width="1.1"/>
<path d="M1046.5 839 L1065 839 M1046.5 851.5 L1065 851.5 M1051.6 824 L1051.6 867.6" fill="none" stroke="#222" stroke-width="1"/>
<path d="M1049.4 832.5 L1051.6 839 L1053.8 832.5 Z M1049.4 858 L1051.6 851.5 L1053.8 858 Z" fill="#222"/>
<path d="M1048 881.6 L1087.6 881.6" fill="none" stroke="#222" stroke-width="1"/>
<path d="M1057.5 879.4 L1064.1 881.6 L1057.5 883.8 Z M1078 879.4 L1071.5 881.6 L1078 883.8 Z" fill="#222"/>
<text x="1002" y="773" style="font-family:Liberation Sans,sans-serif;font-size:12.5px;fill:#4a4a4a">*f</text>
<text x="1005" y="825" style="font-family:Liberation Sans,sans-serif;font-size:12.5px;fill:#4a4a4a">*e</text>
<text x="1029" y="866" style="font-family:Liberation Sans,sans-serif;font-size:12.5px;fill:#4a4a4a">*g</text>
<text x="1066" y="903" style="font-family:Liberation Sans,sans-serif;font-size:12.5px;fill:#4a4a4a">*h</text>
<text x="988.5" y="930" style="font-family:Liberation Sans,sans-serif;font-size:12.5px;fill:#4a4a4a">C</text>
<text x="1231" y="724" style="font-family:Liberation Sans,sans-serif;font-size:12.5px;fill:#4a4a4a">A</text>
<path d="M1244.7 775.2 A20 14.75 0 0 0 1244.7 804.7" fill="none" stroke="#555" stroke-width="1.2" stroke-dasharray="3.2 2.2"/>
<path d="M1244.7 775.2 L1250.5 775.2 A15 14.75 0 0 1 1250.5 804.7 L1244.7 804.7 Z" fill="#b5b5b5" stroke="#222" stroke-width="2.2"/>
<path d="M1247 800 L1258 789 M1251 778 L1262 789" stroke="#555" stroke-width="0.9"/>
<rect x="1245.5" y="787.9" width="43" height="3.8" fill="#fff"/>
<path d="M1244.7 787.9 L1288.3 787.9 M1244.7 791.7 L1288.3 791.7 M1290.5 787.9 L1313.6 787.9 M1269 775.2 L1313.6 775.2" fill="none" stroke="#333" stroke-width="1.3"/>
<path d="M1247 791.7 L1247 853.5 L1234.8 853.5" fill="none" stroke="#444" stroke-width="1.5"/>
<path d="M1308.7 757 L1308.7 806.6" fill="none" stroke="#222" stroke-width="1"/>
<path d="M1306.6 768.5 L1308.7 775.2 L1310.8 768.5 Z M1306.6 794.5 L1308.7 787.9 L1310.8 794.5 Z" fill="#222"/>
<path d="M1296 745.6 L1263 776.5 M1297.1 833.6 L1264 802.5" fill="none" stroke="#222" stroke-width="1.2"/>
<path d="M1261.2 777.9 L1264.5 770.5 L1268.5 774.5 Z M1262.3 801.1 L1269.8 804.2 L1265.8 808.2 Z" fill="#222"/>
<text x="1297.5" y="742" style="font-family:Liberation Sans,sans-serif;font-size:12.5px;fill:#4a4a4a">*d</text>
<text x="1309.5" y="770" style="font-family:Liberation Sans,sans-serif;font-size:12.5px;fill:#4a4a4a">*d</text>
<text x="1304" y="843" style="font-family:Liberation Sans,sans-serif;font-size:12.5px;fill:#4a4a4a">*d</text>
<text x="1214.5" y="859.5" style="font-family:Liberation Sans,sans-serif;font-size:12.5px;fill:#4a4a4a">*1</text>
</svg><div class="t" style="left:983px;top:941.6999999999999px;width:363px;height:179.70px;border:1.5px solid #6e6e6e"></div><div class="t" style="left:1055.6px;top:942.4px;width:1.5px;height:178.20px;background:#6e6e6e"></div><div class="t" style="left:1013.20px;top:942.65px;font-family:'Liberation Sans',sans-serif;font-size:11.6px;line-height:19px;color:#333;font-weight:normal;letter-spacing:1.900px;">*1</div><div class="t" style="left:1059.60px;top:943.15px;font-family:'Liberation Sans',sans-serif;font-size:11.6px;line-height:19px;color:#333;font-weight:normal;letter-spacing:0.225px;">气缸盖衬垫</div><div class="t" style="left:983px;top:961.50px;width:363px;height:1.5px;background:#6e6e6e"></div><div class="t" style="left:1013.20px;top:962.47px;font-family:'Liberation Sans',sans-serif;font-size:11.6px;line-height:19px;color:#333;font-weight:normal;letter-spacing:1.900px;">*a</div><div class="t" style="left:1058.60px;top:962.97px;font-family:'Liberation Sans',sans-serif;font-size:11.6px;line-height:19px;color:#333;font-weight:normal;letter-spacing:0.700px;">批次号</div><div class="t" style="left:983px;top:981.30px;width:363px;height:1.5px;background:#6e6e6e"></div><div class="t" style="left:1013.20px;top:982.29px;font-family:'Liberation Sans',sans-serif;font-size:11.6px;line-height:19px;color:#333;font-weight:normal;letter-spacing:1.900px;">*b</div><div class="t" style="left:1059.60px;top:982.79px;font-family:'Liberation Sans',sans-serif;font-size:11.6px;line-height:19px;color:#333;font-weight:normal;letter-spacing:0.225px;">发动机前部</div><div class="t" style="left:983px;top:1001.10px;width:363px;height:1.5px;background:#6e6e6e"></div><div class="t" style="left:1013.20px;top:1002.11px;font-family:'Liberation Sans',sans-serif;font-size:11.6px;line-height:19px;color:#333;font-weight:normal;letter-spacing:2.900px;">*c</div><div class="t" style="left:1058.60px;top:1002.61px;font-family:'Liberation Sans',sans-serif;font-size:11.6px;line-height:19px;color:#333;font-weight:normal;letter-spacing:0.700px;">密封胶</div><div class="t" style="left:983px;top:1020.90px;width:363px;height:1.5px;background:#6e6e6e"></div><div class="t" style="left:1013.20px;top:1021.93px;font-family:'Liberation Sans',sans-serif;font-size:11.6px;line-height:19px;color:#333;font-weight:normal;letter-spacing:2.900px;">*d</div><div class="t" style="left:1058.60px;top:1022.43px;font-family:'Liberation Sans',sans-serif;font-size:11.6px;line-height:19px;color:#333;font-weight:normal;letter-spacing:1.320px;">3.0 至 5.0 mm（0.118 至 0.197 in.）</div><div class="t" style="left:983px;top:1040.70px;width:363px;height:1.5px;background:#6e6e6e"></div><div class="t" style="left:1013.20px;top:1041.75px;font-family:'Liberation Sans',sans-serif;font-size:11.6px;line-height:19px;color:#333;font-weight:normal;letter-spacing:1.900px;">*e</div><div class="t" style="left:1058.60px;top:1040.75px;font-family:'Liberation Sans',sans-serif;font-size:11.6px;line-height:19px;color:#333;font-weight:normal;letter-spacing:1.527px;">38 mm (1.50 in.)</div><div class="t" style="left:983px;top:1060.50px;width:363px;height:1.5px;background:#6e6e6e"></div><div class="t" style="left:1013.20px;top:1061.57px;font-family:'Liberation Sans',sans-serif;font-size:11.6px;line-height:19px;color:#333;font-weight:normal;letter-spacing:4.900px;">*f</div><div class="t" style="left:1058.60px;top:1060.57px;font-family:'Liberation Sans',sans-serif;font-size:11.6px;line-height:19px;color:#333;font-weight:normal;letter-spacing:1.483px;">152.5 mm (6.00 in.)</div><div class="t" style="left:983px;top:1080.30px;width:363px;height:1.5px;background:#6e6e6e"></div><div class="t" style="left:1013.20px;top:1080.39px;font-family:'Liberation Sans',sans-serif;font-size:11.6px;line-height:19px;color:#333;font-weight:normal;letter-spacing:2.900px;">*g</div><div class="t" style="left:1058.60px;top:1081.89px;font-family:'Liberation Sans',sans-serif;font-size:11.6px;line-height:19px;color:#333;font-weight:normal;letter-spacing:1.287px;">7.0 至 9.0 mm（0.276 至 0.354 in.）</div><div class="t" style="left:983px;top:1100.10px;width:363px;height:1.5px;background:#6e6e6e"></div><div class="t" style="left:1013.20px;top:1101.21px;font-family:'Liberation Sans',sans-serif;font-size:11.6px;line-height:19px;color:#333;font-weight:normal;letter-spacing:2.900px;">*h</div><div class="t" style="left:1058.60px;top:1101.71px;font-family:'Liberation Sans',sans-serif;font-size:11.6px;line-height:19px;color:#333;font-weight:normal;letter-spacing:1.287px;">5.0 至 7.0 mm（0.197 至 0.276 in.）</div><div class="t" style="left:544px;top:796px;font-family:'Liberation Serif',serif;font-size:73px;line-height:90px;color:rgba(236,196,170,.27)"><span style="display:inline-block;width:73.2px">汽</span><span style="display:inline-block;width:73.2px">修</span><span style="display:inline-block;width:73.2px">帮</span><span style="display:inline-block;width:73.2px">手</span><span style="display:inline-block;width:73.2px">在</span><span style="display:inline-block;width:73.2px">线</span><span style="display:inline-block;width:73.2px">资</span><span style="display:inline-block;width:73.2px">料</span><span style="display:inline-block;width:73.2px">库</span></div><div class="t" style="left:397px;top:864.6px;font-family:'Liberation Serif',serif;font-size:73px;line-height:90px;color:rgba(236,196,170,.27)"><span style="display:inline-block;width:73.2px">会</span><span style="display:inline-block;width:73.2px">员</span><span style="display:inline-block;width:73.2px">仅</span><span style="display:inline-block;width:36.6px">1</span><span style="display:inline-block;width:36.6px">6</span><span style="display:inline-block;width:36.6px">8</span><span style="display:inline-block;width:36.6px">/</span><span style="display:inline-block;width:73.2px">年</span><span style="display:inline-block;width:73.2px">，</span><span style="display:inline-block;width:73.2px">每</span><span style="display:inline-block;width:73.2px">周</span><span style="display:inline-block;width:73.2px">更</span><span style="display:inline-block;width:73.2px">新</span><span style="display:inline-block;width:73.2px">车</span><span style="display:inline-block;width:73.2px">型</span></div><div class="t" style="left:1473px;top:344px;width:22px;height:17px;background:#2b2b2e;border:1px solid #7a7a7a"></div></body></html>
